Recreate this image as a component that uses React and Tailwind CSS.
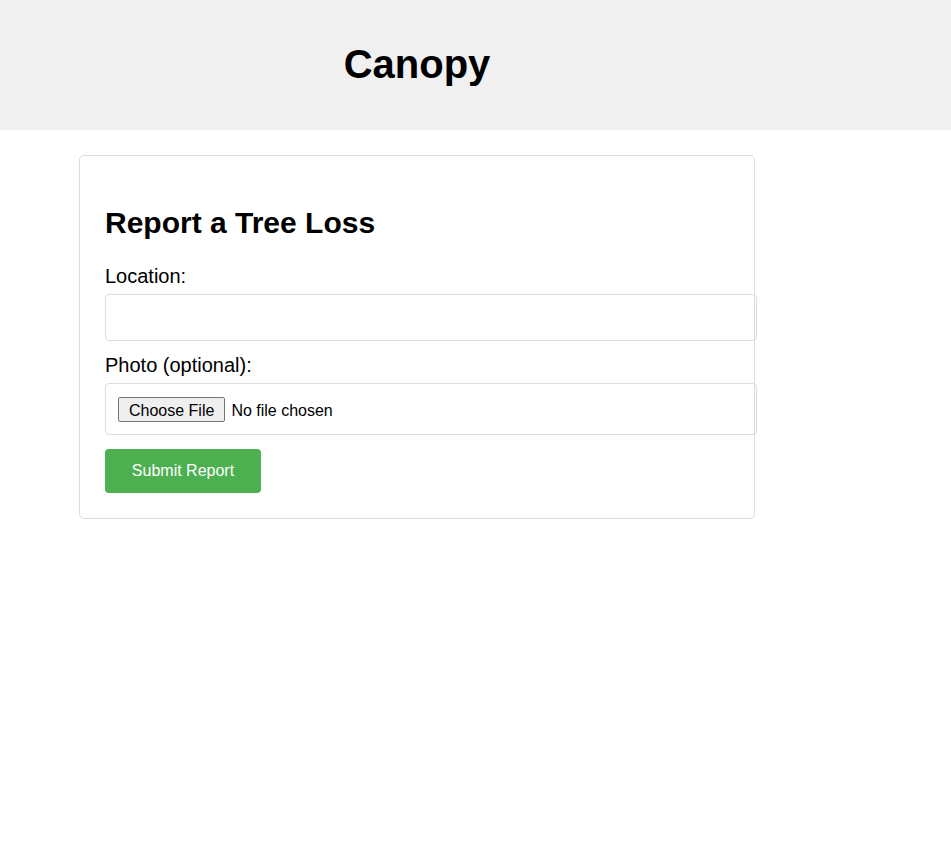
export default function App() {
  return (
    <div className="min-h-[852px] bg-white font-['Liberation_Sans',Arial,sans-serif] text-black">
      <header className="h-[130px] bg-[#f0f0f0] flex items-center">
        <div className="ml-[79px] w-[676px] text-center pb-[3px]">
          <h1 className="text-[40px] font-bold leading-[46px]">Canopy</h1>
        </div>
      </header>
      <main className="ml-[79px] w-[676px] mt-[25px]">
        <div className="border border-[#ddd] rounded-[5px] px-[25px] pt-[25px] pb-[25px]">
          <h2 className="text-[30px] font-bold leading-[34px] mt-[25px] mb-[25px]">Report a Tree Loss</h2>
          <label className="block text-[20px] leading-[23px] mb-[6px]">Location:</label>
          <input
            type="text"
            className="block w-[652px] h-[47px] border border-[#ddd] rounded-[4px] px-[12px] text-[16px] outline-none"
          />
          <label className="block text-[20px] leading-[23px] mt-[13px] mb-[6px]">Photo (optional):</label>
          <input
            type="file"
            className="block w-[652px] h-[52px] border border-[#ddd] rounded-[4px] px-[12px] pt-[13px] pb-[12px] text-[16px] leading-[25px] file:mr-[6px] file:border file:border-[#767676] file:bg-[#efefef] file:rounded-[2px] file:px-[10px] file:h-[25px] file:text-[16px]"
          />
          <button className="mt-[14px] h-[44px] w-[156px] bg-[#4CAF50] text-white text-[16px] rounded-[4px]">
            Submit Report
          </button>
        </div>
      </main>
    </div>
  );
}
